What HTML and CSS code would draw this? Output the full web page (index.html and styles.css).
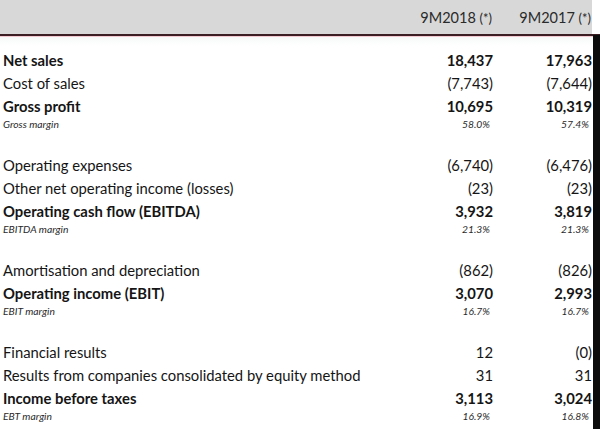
FILE: index.html
```html
<!DOCTYPE html>
<html>
<head>
<meta charset="utf-8">
<link rel="stylesheet" href="styles.css">
</head>
<body>
<div class="page">
  <div class="sheet">
    <div class="head">
      <div></div>
      <div class="hcell">9M2018 <span class="ast">(*)</span></div>
      <div class="hcell">9M2017 <span class="ast">(*)</span></div>
    </div>
    <div class="rule"></div>
    <div class="tint"></div>
    <div class="table">
      <div class="row bold"><span>Net sales</span><span>18,437</span><span>17,963</span></div>
      <div class="row"><span>Cost of sales</span><span>(7,743)</span><span>(7,644)</span></div>
      <div class="row bold"><span>Gross profit</span><span>10,695</span><span>10,319</span></div>
      <div class="row margin"><span>Gross margin</span><span>58.0%</span><span>57.4%</span></div>
      <div class="spacer"></div>
      <div class="row"><span>Operating expenses</span><span>(6,740)</span><span>(6,476)</span></div>
      <div class="row"><span>Other net operating income (losses)</span><span>(23)</span><span>(23)</span></div>
      <div class="row bold"><span>Operating cash flow (EBITDA)</span><span>3,932</span><span>3,819</span></div>
      <div class="row margin"><span>EBITDA margin</span><span>21.3%</span><span>21.3%</span></div>
      <div class="spacer"></div>
      <div class="row"><span>Amortisation and depreciation</span><span>(862)</span><span>(826)</span></div>
      <div class="row bold"><span>Operating income (EBIT)</span><span>3,070</span><span>2,993</span></div>
      <div class="row margin"><span>EBIT margin</span><span>16.7%</span><span>16.7%</span></div>
      <div class="spacer"></div>
      <div class="row"><span>Financial results</span><span>12</span><span>(0)</span></div>
      <div class="row"><span>Results from companies consolidated by equity method</span><span>31</span><span>31</span></div>
      <div class="row bold"><span>Income before taxes</span><span>3,113</span><span>3,024</span></div>
      <div class="row margin"><span>EBT margin</span><span>16.9%</span><span>16.8%</span></div>
    </div>
  </div>
  <div class="edge"></div>
</div>
</body>
</html>
```
FILE: styles.css
```css
html, body {
  margin: 0;
  padding: 0;
  background: #ffffff;
}
body {
  font-family: Lato, "Open Sans", sans-serif;
  color: #151515;
  width: 600px;
  height: 429px;
  overflow: hidden;
}
.page {
  display: flex;
  height: 429px;
}
.sheet {
  flex: 0 0 593px;
  display: flex;
  flex-direction: column;
}
.edge {
  flex: 1;
  margin-top: 35px;
  background: #0c0c0c;
}
.head {
  display: grid;
  grid-template-columns: 1fr 99px 99px;
  height: 34px;
  align-items: center;
  background: #d8d8d8;
  padding-right: 1px;
  margin-right: 1px;
}
.hcell {
  text-align: right;
  font-size: 14.5px;
  color: #2a2a2a;
}
.ast {
  font-size: 13px;
}
.rule {
  height: 2px;
  background: #3b1e24;
  margin-right: -7px;
}
.tint {
  height: 1px;
  background: #f3c9d1;
}
.table {
  padding-top: 11px;
  background: linear-gradient(#f6f9f8, #ffffff 9px);
}
.row {
  display: grid;
  grid-template-columns: 1fr 99px 99px;
  height: 23px;
  align-items: center;
  font-size: 14.8px;
  padding-left: 3px;
  padding-right: 1px;
}
.row span:not(:first-child) {
  text-align: right;
}
.bold {
  font-weight: 700;
}
.margin {
  height: 14px;
  font-size: 10.3px;
  font-style: italic;
  color: #2a2a2a;
}
.margin span:not(:first-child) {
  padding-right: 3px;
}
.spacer {
  height: 22px;
}
```
